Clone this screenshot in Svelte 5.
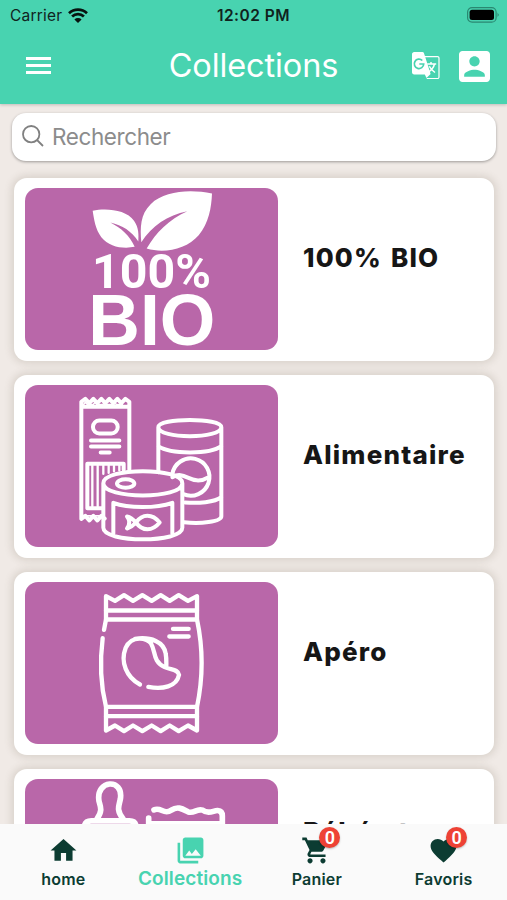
<script>
  const collections = [
    { id: "bio", title: "100% BIO", viewBox: "46 49 759 485" },
    { id: "food", title: "Alimentaire", viewBox: "46 39 759 485" },
    { id: "snack", title: "Apéro", viewBox: "46 41 759 485" },
    { id: "baby", title: "Bébé et maman", viewBox: "76 71 759 485" },
  ];

  const tabs = [
    {
      label: "home",
      icon: "M10 20v-6h4v6h5v-8h3L12 3 2 12h3v8z",
    },
    {
      label: "Collections",
      icon: "M22 16V4c0-1.100-.9-2-2-2H8c-1.100 0-2 .9-2 2v12c0 1.100.9 2 2 2h12c1.100 0 2-.9 2-2zm-11-4l2.030 2.710L16 11l4 5H8l3-4zM2 6v14c0 1.100.9 2 2 2h14v-2H4V6H2z",
      active: true,
    },
    {
      label: "Panier",
      icon: "M7 18c-1.100 0-1.990.9-1.990 2S5.900 22 7 22s2-.9 2-2-.9-2-2-2zM1 2v2h2l3.600 7.590-1.350 2.450c-.16.28-.25.61-.25.960 0 1.100.9 2 2 2h12v-2H7.420c-.14 0-.25-.11-.25-.25l.03-.12.9-1.630h7.450c.75 0 1.410-.41 1.750-1.030l3.580-6.490c.08-.14.12-.31.12-.48 0-.55-.45-1-1-1H5.210l-.94-2H1zm16 16c-1.100 0-1.990.9-1.990 2s.89 2 1.990 2 2-.9 2-2-.9-2-2-2z",
      count: 0,
    },
    {
      label: "Favoris",
      icon: "M12 21.350l-1.450-1.320C5.400 15.360 2 12.280 2 8.500 2 5.420 4.420 3 7.500 3c1.740 0 3.410.81 4.500 2.090C13.090 3.810 14.760 3 16.500 3 19.580 3 22 5.420 22 8.500c0 3.780-3.400 6.860-8.550 11.540L12 21.350z",
      count: 0,
    },
  ];
</script>

<div class="app">
  <header>
    <div class="status">
      <div class="carrier">
        <span>Carrier</span>
        <svg class="wifi" viewBox="0 0 20 15">
          <path d="M1 5.200a13 13 0 0 1 18 0M4.100 8.500a8.500 8.500 0 0 1 11.800 0" />
          <path class="dot" d="M6.400 11.500a5.200 5.200 0 0 1 7.200 0L10 15z" />
        </svg>
      </div>
      <span class="time">12:02 PM</span>
      <svg class="battery" viewBox="0 0 33 16">
        <rect class="shell" x=".6" y=".6" width="28.500" height="14.600" rx="4.500" />
        <rect x="2.600" y="2.700" width="24.400" height="10.400" rx="2.500" />
        <path d="M30.700 5.500q1.700 2.300 0 4.600z" opacity=".55" />
      </svg>
    </div>

    <div class="toolbar">
      <button class="menu" aria-label="Menu">
        <svg viewBox="0 0 25 18">
          <path d="M0 1.500h25M0 8.500h25M0 15.500h25" />
        </svg>
      </button>
      <h1>Collections</h1>
      <div class="actions">
        <button aria-label="Langue">
          <svg class="translate" viewBox="0 0 28 28">
            <path
              class="page"
              fill-rule="evenodd"
              d="M2.200 0h8.200c.8 0 1.300.4 1.500 1.100l1 3h12.600c1.200 0 2.100.9 2.100 2.100v18.700c0 1.200-.9 2.100-2.100 2.100H15l-2.200-4.500H2.200C1 22.500 0 21.600 0 20.300V2.200C0 1 1 0 2.200 0zM13.300 5.300l5.300 16.600-4.200 4h11c.7 0 1-.4 1-1V6.300c0-.6-.4-1-1-1z"
            />
            <path class="g" d="M10.300 8.500A4.700 4.700 0 1 0 11.700 12H7.300" />
            <path class="sign" d="M15.200 12h9M19 10v2M22.500 12c-.8 3.300-3 6-6 8M17.300 14.200c1.200 2.500 3.200 4.500 5.700 6.300" />
          </svg>
        </button>
        <button aria-label="Compte">
          <svg class="account" viewBox="3 3 18 18">
            <path
              d="M3 5v14c0 1.100.89 2 2 2h14c1.100 0 2-.9 2-2V5c0-1.100-.9-2-2-2H5c-1.110 0-2 .9-2 2zm12 4c0 1.660-1.340 3-3 3s-3-1.340-3-3 1.340-3 3-3 3 1.340 3 3zm-9 8c0-2 4-3.100 6-3.100s6 1.100 6 3.100v1H6v-1z"
            />
          </svg>
        </button>
      </div>
    </div>
  </header>

  <main>
    <label class="search">
      <svg viewBox="0 0 22 22">
        <circle cx="9.200" cy="9.200" r="8.200" />
        <path d="M15 15l6 6" />
      </svg>
      <input type="text" placeholder="Rechercher" />
    </label>

    <div class="list">
      {#each collections as item (item.id)}
        <article>
          <svg class="art" viewBox={item.viewBox}>
            {#if item.id === "bio"}
              <g class="solid">
                <path d="M249 117C290 108 350 114 373 147C388 168 387 190 386 209C366 178 338 160 302 152C334 169 360 190 375 225C340 232 298 225 275 196C257 173 253 142 249 117z" />
                <path d="M607 65C540 52 465 57 423 97C392 127 391 167 395 211C427 161 473 130 533 118C478 143 439 181 411 230C464 246 531 232 567 190C598 153 605 108 607 65z" />
                <text class="percent" x="247" y="350" textLength="357" lengthAdjust="spacingAndGlyphs">100%</text>
                <text class="bio" x="236" y="521" textLength="381" lengthAdjust="spacingAndGlyphs">BIO</text>
              </g>
            {:else if item.id === "food"}
              <g class="line">
                <path d="M285 439l-10-8-12 14-12-14-12 14-12-14-12 9V89l12-9 12 13 12-13 12 13 12-13 12 13 12-13 12 13 12-13 12 13 12-13 12 9V292M217 104H356" />
                <path d="M222 97l5-7 6 7 18 0 5-7 6 7 18 0 5-7 6 7 18 0 5-7 6 7 18 0M220 431h60" stroke-width="5" />
                <rect x="250" y="145" width="74" height="39" rx="19" />
                <path d="M244 205h85M244 223h85M273 241h27" />
                <path d="M276 408H233V275H342V293" />
                <path class="bars" d="M248 280V402M264 280V402M281 280V305M297 280V302M313 280V297M329 280V295" />
                <path d="M446 300V165C446 136 635 136 635 165V432C635 449 570 456 523 450M446 165C446 201 635 201 635 165M446 222C482 247 601 247 635 222M526 391C565 394 615 391 635 375" />
                <path d="M488 306A56 56 0 1 1 521 366M488 315C528 291 544 346 597 315" />
                <path d="M281 333C281 285 518 285 518 333C518 382 281 382 281 333zM281 333V467C281 513 518 513 518 467V333M311 485V392C356 409 440 409 488 392V485" />
                <ellipse cx="348" cy="334" rx="26" ry="13" />
                <path d="M379 451C398 424 428 424 450 451C428 478 398 478 379 451C370 441 361 435 352 433Q366 450 352 469C364 465 372 459 379 451z" />
              </g>
            {:else if item.id === "snack"}
              <g class="line thick">
                <path d="M283 184L289 153V83L316 97 343 80 370 97 398 80 426 97 453 80 480 97 507 80 535 97 562 83V153C581 242 581 325 562 415V486L535 471 507 488 480 471 453 488 426 471 398 488 370 471 343 488 316 471 289 486V415C270 338 271 272 279 209" />
                <path d="M289 126H562M289 153H562M289 415H562M289 443H562M490 181H537M479 204H537" />
                <path d="M391 348C351 327 331 281 348 238C366 198 414 208 424 225C439 250 428 278 465 296C483 305 505 301 508 319C501 355 458 363 416 355M376 211C424 204 463 220 468 255C471 271 470 281 470 293" />
              </g>
            {:else}
              <g class="line baby">
                <path d="M292 190C310 165 302 153 298 137C287 72 373 67 362 131C358 151 349 163 370 190M254 215Q255 196 275 196H389Q409 196 409 215M447 188V242M463 163C485 154 492 179 515 164C534 151 548 160 565 169C583 176 590 158 609 164C627 179 642 164 654 165Q668 166 668 181V242M447 205H668" />
              </g>
            {/if}
          </svg>
          <h2>{item.title}</h2>
        </article>
      {/each}
    </div>
  </main>

  <nav>
    {#each tabs as tab (tab.label)}
      <a href="#{tab.label}" class:active={tab.active}>
        <span class="icon">
          <svg viewBox="0 0 24 24"><path d={tab.icon} /></svg>
          {#if tab.count !== undefined}
            <span class="badge">{tab.count}</span>
          {/if}
        </span>
        <span class="label">{tab.label}</span>
      </a>
    {/each}
  </nav>
</div>

<style>
  :global(body) {
    margin: 0;
    overflow: hidden;
  }

  .app {
    width: 507px;
    height: 900px;
    display: flex;
    flex-direction: column;
    overflow: hidden;
    background: #f0eae6;
    font-family: Inter, "Liberation Sans", sans-serif;
  }

  svg {
    display: block;
    flex: none;
  }

  button {
    padding: 0;
    border: 0;
    background: none;
  }

  header {
    height: 104px;
    flex: none;
    background: #48d3b0;
    box-shadow: 0 1px 3px rgba(0, 0, 0, 0.2);
    z-index: 1;
  }

  .status {
    height: 30px;
    box-sizing: border-box;
    padding: 0 7px 0 10px;
    display: grid;
    grid-template-columns: 1fr auto 1fr;
    align-items: center;
    font-size: 15.5px;
    color: #10231e;
  }

  .carrier {
    display: flex;
    align-items: center;
    gap: 6px;
    letter-spacing: 0.2px;
  }

  .wifi {
    width: 20px;
    height: 15px;
    fill: none;
    stroke: #07120f;
    stroke-width: 2.7;
  }

  .wifi .dot {
    fill: #07120f;
    stroke: none;
  }

  .time {
    margin-right: 3px;
    font-weight: 600;
    letter-spacing: 0.5px;
  }

  .battery {
    width: 33px;
    height: 16px;
    justify-self: end;
  }

  .battery .shell {
    fill: none;
    stroke: #2a8871;
    stroke-width: 1.2;
  }

  .toolbar {
    height: 72px;
    padding: 0 17px 0 26px;
    display: grid;
    grid-template-columns: 1fr auto 1fr;
    align-items: center;
  }

  .menu svg {
    width: 25px;
    height: 18px;
    stroke: #fff;
    stroke-width: 2.8;
  }

  h1 {
    margin: 0 9px 1px 0;
    color: #fff;
    font-size: 32.5px;
    font-weight: 400;
    letter-spacing: -0.1px;
  }

  .actions {
    display: flex;
    align-items: center;
    justify-content: flex-end;
    gap: 19px;
  }

  .translate {
    width: 28px;
    height: 28px;
    fill: none;
  }

  .translate .page {
    fill: #fff;
  }

  .translate .g {
    stroke: #48d3b0;
    stroke-width: 1.7;
  }

  .translate .sign {
    stroke: #fff;
    stroke-width: 1.5;
  }

  .account {
    width: 31px;
    height: 31px;
    fill: #fff;
  }

  main {
    flex: 1;
    min-height: 0;
    overflow: hidden;
  }

  .search {
    height: 48px;
    margin: 9px 11px 0 12px;
    padding-left: 10px;
    display: flex;
    align-items: center;
    gap: 8px;
    border-radius: 14px;
    background: #fff;
    box-shadow: 0 1px 3px rgba(0, 0, 0, 0.35);
  }

  .search svg {
    width: 22px;
    height: 22px;
    margin-bottom: 3px;
    fill: none;
    stroke: #808080;
    stroke-width: 1.8;
  }

  .search input {
    flex: 1;
    padding: 0 0 1px;
    border: 0;
    outline: 0;
    background: none;
    font: 400 22.5px Inter, "Liberation Sans", sans-serif;
    letter-spacing: -0.4px;
  }

  .search input::placeholder {
    color: #8c8c8c;
    opacity: 1;
  }

  .list {
    margin-top: 16px;
    padding: 0 13px 0 14px;
    display: flex;
    flex-direction: column;
    gap: 14px;
  }

  article {
    height: 183px;
    box-sizing: border-box;
    padding: 10px 11px;
    display: flex;
    align-items: flex-start;
    gap: 25px;
    border-radius: 13px;
    background: #fff;
    box-shadow: 0 0 7px 3px rgba(100, 90, 70, 0.15);
  }

  .list {
    padding-top: 0.5px;
  }

  .art {
    width: 253px;
    height: 162px;
    border-radius: 13px;
    background: #b967a9;
  }

  .solid {
    fill: #fff;
  }

  .percent {
    font: 700 143px Roboto, sans-serif;
  }

  .bio {
    font: 700 216px "Liberation Sans", sans-serif;
  }

  .line {
    fill: none;
    stroke: #fff;
    stroke-width: 12;
    stroke-linecap: round;
    stroke-linejoin: round;
  }

  .bars {
    stroke-width: 7;
  }

  .thick {
    stroke-width: 13;
  }

  .baby {
    stroke-width: 17;
  }

  h2 {
    width: 172px;
    height: 140px;
    margin: 0;
    display: flex;
    align-items: center;
    color: #161616;
    font-size: 26px;
    font-weight: 800;
    line-height: 34px;
    letter-spacing: 1.2px;
    word-spacing: 2px;
  }

  nav {
    height: 76px;
    flex: none;
    display: grid;
    grid-template-columns: repeat(4, 1fr);
    background: #fafafa;
    z-index: 1;
  }

  nav a {
    padding-top: 11px;
    display: flex;
    flex-direction: column;
    align-items: center;
    gap: 3px;
    color: #0c3c32;
    text-decoration: none;
  }

  .icon {
    position: relative;
  }

  .icon svg {
    width: 31px;
    height: 31px;
    fill: currentColor;
  }

  .label {
    font-size: 16px;
    font-weight: 600;
    line-height: 20px;
    letter-spacing: 0.2px;
  }

  nav .active {
    gap: 1px;
    color: #48d3b0;
  }

  .active .label {
    font-size: 19px;
    line-height: 24px;
    letter-spacing: 0.1px;
  }

  .badge {
    position: absolute;
    top: -8px;
    right: -8px;
    width: 21px;
    height: 21px;
    border-radius: 50%;
    background: #ee4235;
    box-shadow: 0 1px 2px rgba(0, 0, 0, 0.25);
    color: #fff;
    font: 600 18px/22px Roboto, sans-serif;
    text-align: center;
  }
</style>
